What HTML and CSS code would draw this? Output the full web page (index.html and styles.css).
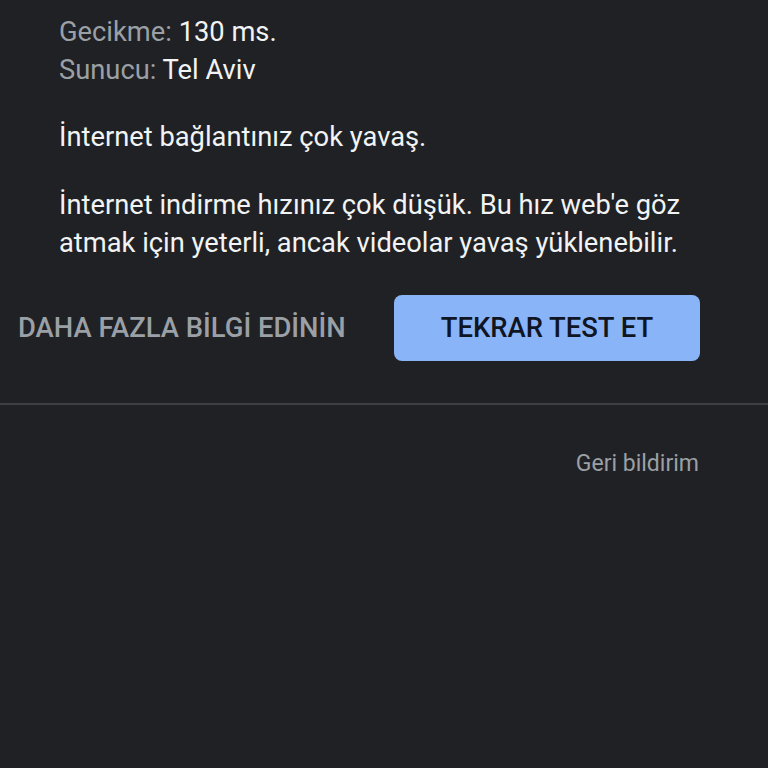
FILE: index.html
```html
<!DOCTYPE html>
<html lang="tr">
<head>
<meta charset="utf-8">
<link rel="stylesheet" href="styles.css">
</head>
<body>
<div class="page">
  <section class="content">
    <div class="stats">
      <div class="stat"><span class="label">Gecikme:</span> <span class="value">130 ms.</span></div>
      <div class="stat"><span class="label">Sunucu:</span> <span class="value">Tel Aviv</span></div>
    </div>
    <p class="headline">İnternet bağlantınız çok yavaş.</p>
    <p class="desc">İnternet indirme hızınız çok düşük. Bu hız web'e göz atmak için yeterli, ancak videolar yavaş yüklenebilir.</p>
  </section>
  <div class="actions">
    <span class="link-btn">DAHA FAZLA BİLGİ EDİNİN</span>
    <span class="primary-btn">TEKRAR TEST ET</span>
  </div>
  <hr class="divider">
  <div class="footer">
    <span class="feedback">Geri bildirim</span>
  </div>
</div>
</body>
</html>
```
FILE: styles.css
```css
html, body {
  margin: 0;
  padding: 0;
  background: #202124;
}
body {
  font-family: Roboto, "Noto Sans", sans-serif;
  color: #f1f3f4;
  width: 768px;
  height: 768px;
  overflow: hidden;
}
.page {
  display: flex;
  flex-direction: column;
}
.content {
  padding: 13px 0 0 59px;
  width: 640px;
}
.stats {
  display: flex;
  flex-direction: column;
}
.stat {
  font-size: 27.3px;
  line-height: 38px;
}
.label {
  color: #9aa0a6;
}
.value {
  color: #f1f3f4;
}
.headline {
  margin: 29px 0 0;
  font-size: 27.3px;
  line-height: 38px;
}
.desc {
  margin: 30px 0 0;
  font-size: 27.3px;
  line-height: 38px;
}
.actions {
  display: flex;
  align-items: center;
  padding: 33px 68px 0 18px;
  justify-content: space-between;
}
.link-btn {
  color: #9aa0a6;
  font-size: 27.4px;
  font-weight: 500;
}
.primary-btn {
  background: #8ab4f8;
  color: #0f1522;
  border-radius: 8px;
  width: 306px;
  height: 66px;
  display: flex;
  align-items: center;
  justify-content: center;
  font-size: 27.4px;
  font-weight: 500;
}
.divider {
  margin: 42px 0 0;
  border: 0;
  border-top: 2px solid #3c4043;
  width: 100%;
}
.footer {
  display: flex;
  justify-content: flex-end;
  padding: 45px 69px 0 0;
}
.feedback {
  color: #9aa0a6;
  font-size: 23px;
}
```
